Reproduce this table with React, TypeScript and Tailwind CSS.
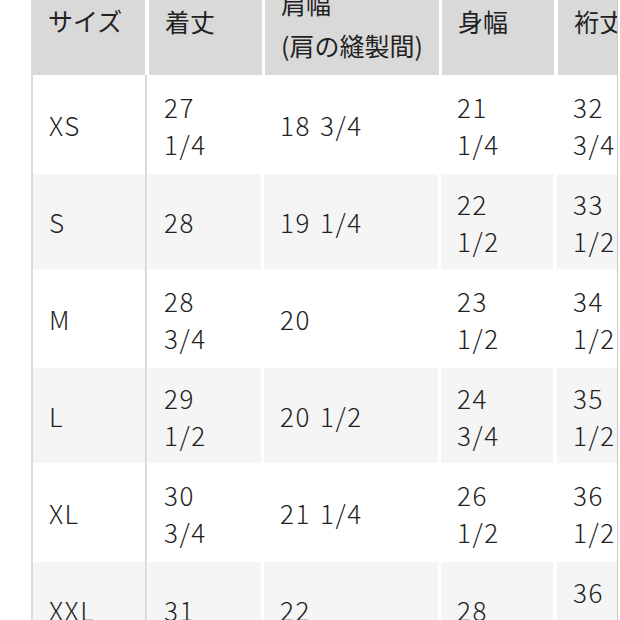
import React from "react";

type Row = { size: string; cols: string[][]; grey: boolean };

const rows: Row[] = [
  { size: "XS", cols: [["27", "1/4"], ["18 3/4"], ["21", "1/4"], ["32", "3/4"]], grey: false },
  { size: "S", cols: [["28"], ["19 1/4"], ["22", "1/2"], ["33", "1/2"]], grey: true },
  { size: "M", cols: [["28", "3/4"], ["20"], ["23", "1/2"], ["34", "1/2"]], grey: false },
  { size: "L", cols: [["29", "1/2"], ["20 1/2"], ["24", "3/4"], ["35", "1/2"]], grey: true },
  { size: "XL", cols: [["30", "3/4"], ["21 1/4"], ["26", "1/2"], ["36", "1/2"]], grey: false },
  { size: "XXL", cols: [["31"], ["22"], ["28"], ["36", "3/4"]], grey: true },
];

const widths = ["w-[113px]", "w-[174px]", "w-[112px]", "w-[120px]"];

function Lines({ lines }: { lines: string[] }) {
  return (
    <div className="flex flex-col leading-[37px] text-[26px] font-light tracking-[1.5px] [word-spacing:2px]">
      {lines.map((l, i) => (
        <span key={i} className="whitespace-nowrap">
          {l}
        </span>
      ))}
    </div>
  );
}

export default function App() {
  return (
    <div
      className="w-[620px] h-[620px] overflow-hidden bg-white text-[25px] text-[#222]"
      style={{ fontFamily: '"Noto Sans CJK JP", "Noto Sans", sans-serif' }}
    >
      <div className="ml-[31px] w-[587px] h-[620px] overflow-hidden border-r border-[#c9c9c9]">
        <div className="-mt-[28px] w-[700px]">
          {/* header */}
          <div className="flex h-[103px] gap-[3px]">
            <div className="w-[114px] bg-[#d9d9d9] flex items-center pl-[17px] pb-[6px]">サイズ</div>
            <div className="w-[113px] ml-[1px] bg-[#d9d9d9] flex items-center pl-4 pb-[3px]">着丈</div>
            <div className="w-[174px] bg-[#d9d9d9] flex items-center pl-4">
              <div className="flex flex-col leading-[42px]">
                <span>肩幅</span>
                <span className="whitespace-nowrap">(肩の縫製間)</span>
              </div>
            </div>
            <div className="w-[112px] bg-[#d9d9d9] flex items-center pl-4 pb-[3px]">身幅</div>
            <div className="w-[120px] ml-[1px] bg-[#d9d9d9] flex items-center pl-4 pb-[3px]">裄丈</div>
          </div>
          {/* body */}
          {rows.map((r) => (
            <div key={r.size} className="flex h-[97px] gap-[3px]">
              <div className="w-[116px] border-x-2 border-[#dadada] -mr-[2px]">
                <div
                  className={`mt-[2px] h-[95px] flex items-center pl-[16px] ${r.grey ? "bg-[#f5f5f5]" : "bg-white"}`}
                >
                  <Lines lines={[r.size]} />
                </div>
              </div>
              {r.cols.map((c, i) => (
                <div key={i} className={`${widths[i]} ${i === 3 ? "ml-[1px]" : ""}`}>
                  <div
                    className={`mt-[2px] h-[95px] flex items-center pl-4 ${r.grey ? "bg-[#f5f5f5]" : "bg-white"}`}
                  >
                    <Lines lines={c} />
                  </div>
                </div>
              ))}
            </div>
          ))}
        </div>
      </div>
    </div>
  );
}
